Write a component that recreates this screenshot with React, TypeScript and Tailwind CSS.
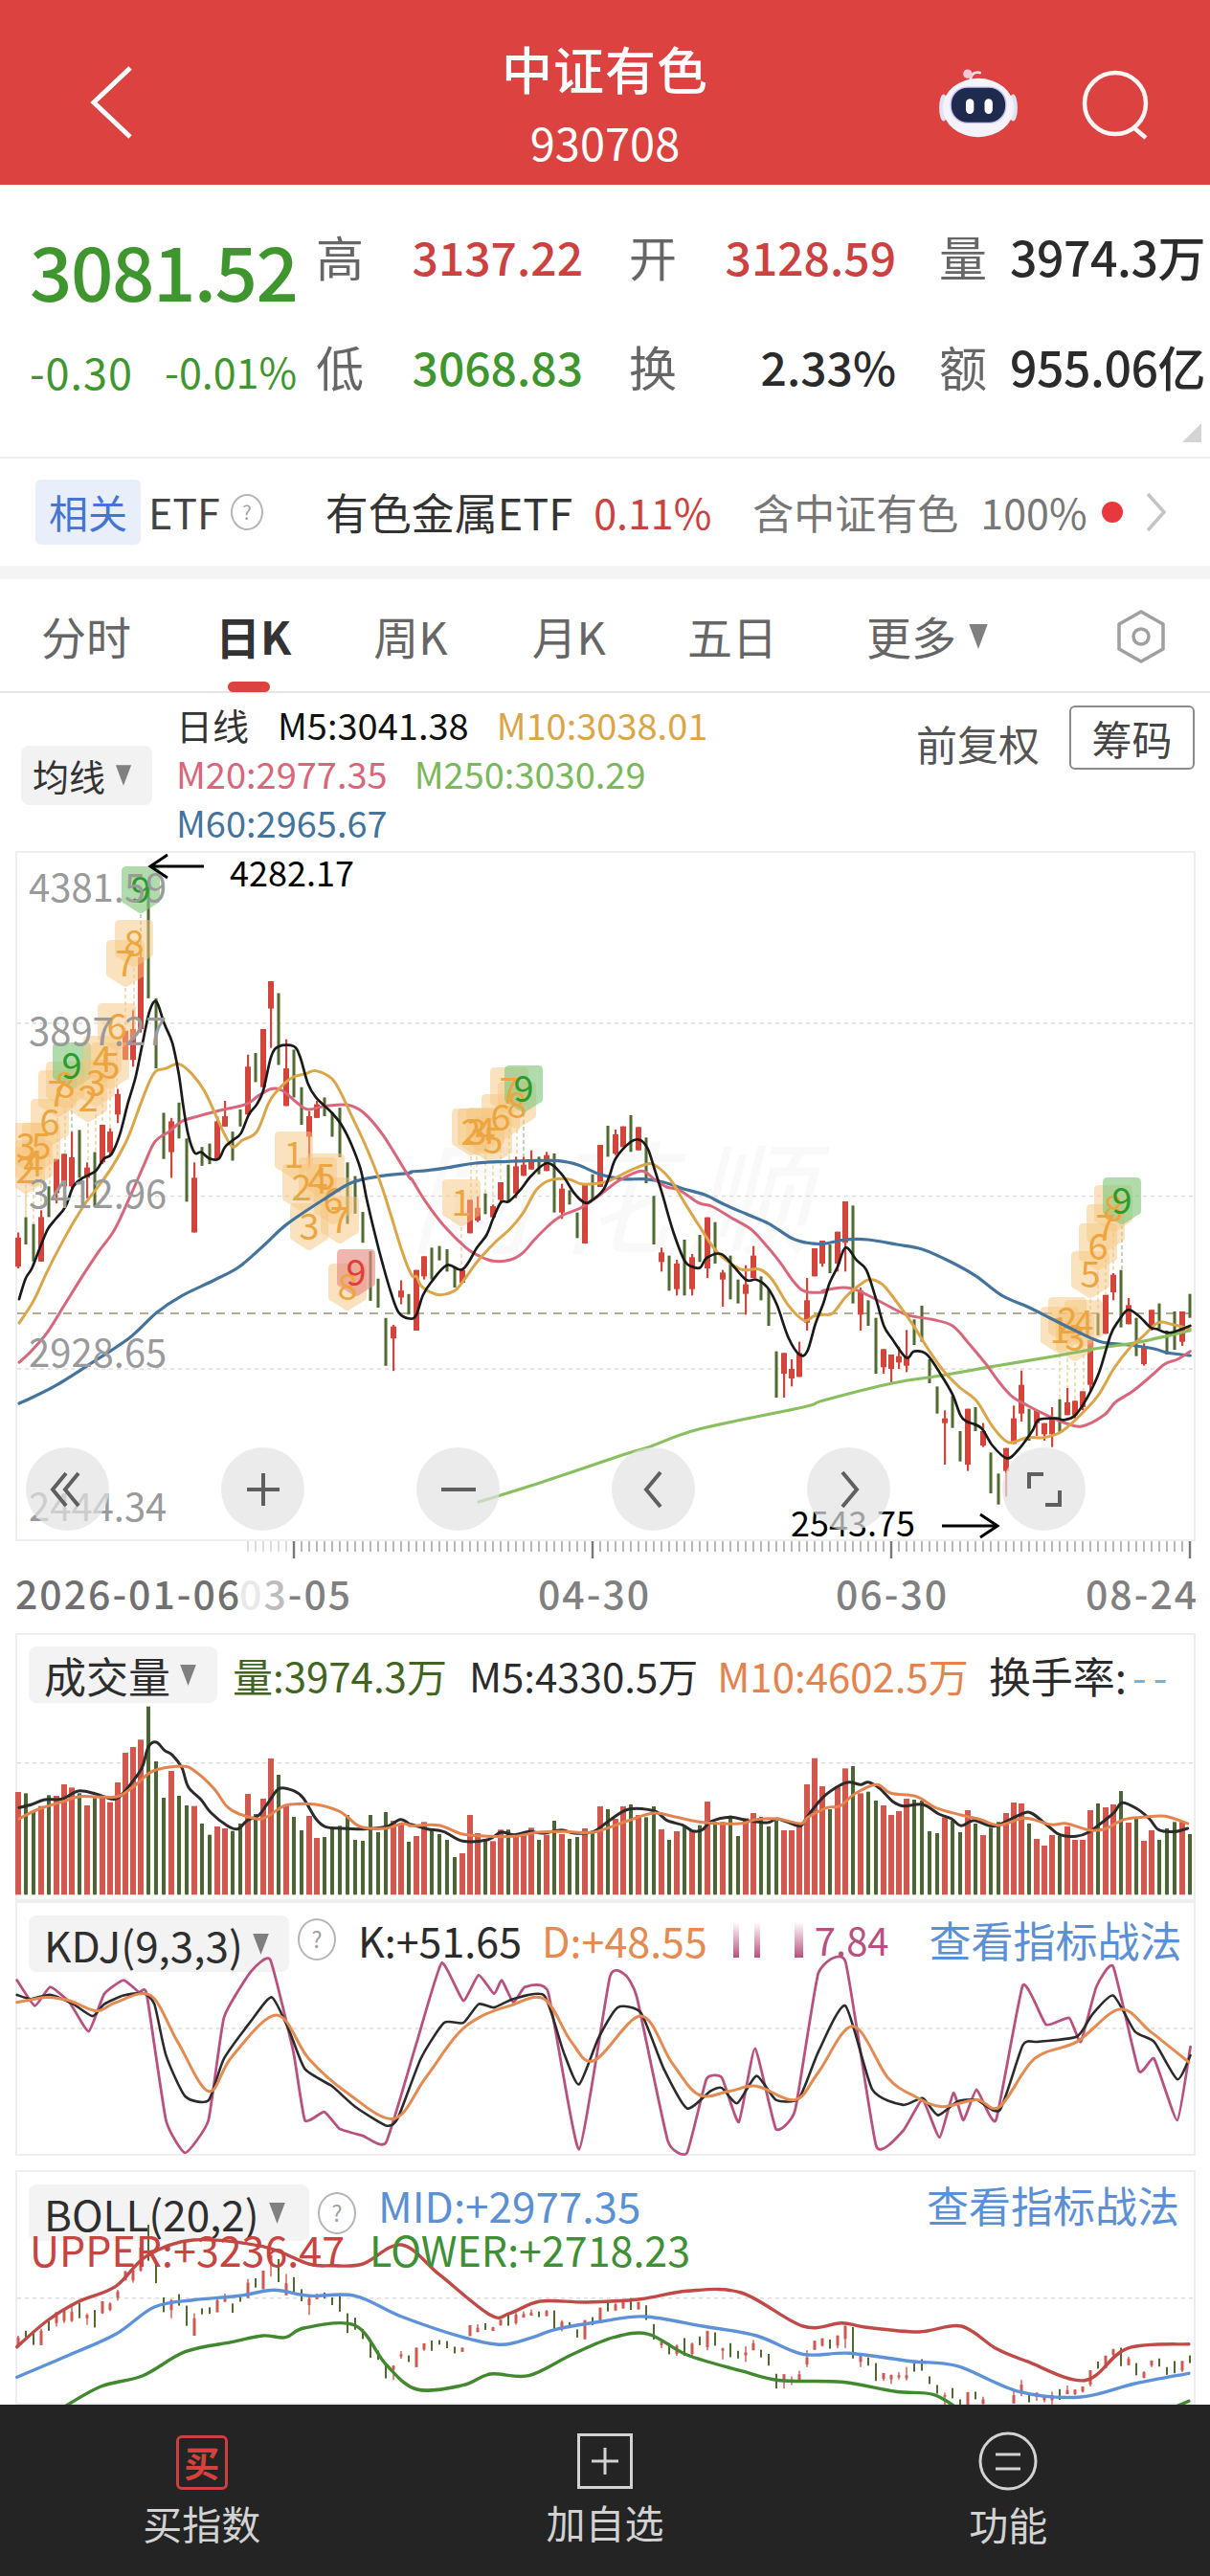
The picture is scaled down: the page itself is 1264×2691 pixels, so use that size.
import React from "react";

type P = [number, number];
type Candle = ["r" | "g", number, number, number, number];

const GREEN = "#4f6b2f";

// candles: colour, wick top, body top, body bottom, wick bottom
const candlesA: Candle[] = [
	["r",1085,1100,1185,1190],["g",1040,1040,1120,1120],["g",1060,1060,1170,1170],["r",1020,1040,1170,1170],["g",950,950,1040,1040],
	["r",870,870,970,1000],["r",855,855,950,970],["r",790,865,950,960],["g",785,785,925,925],["r",880,895,925,985],
	["g",850,850,1010,1010],["r",770,770,880,885],["r",780,790,850,860],["r",665,680,740,765],["r",495,495,580,580],
	["r",435,490,580,600],["r",265,280,490,500],["g",70,70,400,400],["g",400,400,605,605],["g",735,735,870,870],
	["r",750,760,850,925],["g",705,705,810,810],["g",810,810,995,995],["r",880,925,1085,1085],["g",835,835,890,890],
	["g",825,825,885,885],["r",745,760,870,870],["r",700,745,775,775],["g",790,790,875,875],["g",725,725,775,775],
	["r",565,600,740,740],["g",560,560,645,645],["r",490,490,660,660],["r",350,350,430,545],["g",385,385,595,595],
	["r",520,605,715,715],["g",550,550,690,690],["g",660,660,770,770],["r",730,745,805,895],["r",700,710,750,750],
	["g",690,690,745,745],["g",735,735,805,805],["g",720,720,865,865],["g",880,880,1060,1060],["g",920,920,1030,1030],
	["g",1025,1025,1115,1115],["g",1140,1140,1285,1285],["g",1220,1220,1305,1305],["g",1335,1335,1475,1475],["r",1355,1360,1395,1490],
	["r",1225,1255,1275,1295],["g",1265,1265,1325,1325],
];
const candlesB: Candle[] = [
	["r",620,620,810,810],["r",577,577,640,650],["g",550,550,650,650],["g",545,545,590,590],["g",555,555,625,625],
	["g",610,610,675,675],["r",620,620,660,660],["r",400,400,505,505],["r",390,425,465,470],["g",380,380,445,445],
	["r",415,420,455,455],["r",345,345,400,405],["g",290,290,405,405],["r",265,295,380,395],["r",265,290,325,325],
	["r",245,275,305,305],["g",265,265,320,320],["r",250,260,310,310],["g",255,255,440,440],["r",350,365,440,460],
	["g",370,370,415,415],["g",440,440,520,520],["r",350,350,537,537],["g",320,320,400,400],["r",228,228,360,360],
	["g",168,168,265,265],["r",180,195,255,260],["r",170,170,235,235],["g",135,135,250,250],["r",172,172,245,245],
	["g",205,205,348,348],["g",388,388,540,540],["r",550,565,595,625],["g",575,575,685,685],["r",588,600,680,700],
	["g",525,525,700,700],["r",570,580,680,700],["g",510,510,595,595],["r",455,455,615,645],["g",470,470,600,600],
	["r",620,628,650,735],["g",575,575,712,712],["g",650,650,725,725],["r",605,665,695,760],["r",545,575,645,645],
	["g",640,640,715,715],["g",680,680,795,795],["g",875,875,1020,1020],["r",880,880,945,1020],["r",900,930,960,985],
	["r",845,880,955,955],["r",645,715,785,810],["r",552,552,640,640],
];
const candlesC: Candle[] = [
	["r",228,228,300,310],["g",240,240,330,330],["r",200,200,300,325],["r",105,105,235,325],["g",118,118,425,425],
	["r",375,385,460,510],["g",415,415,495,495],["g",470,470,645,645],["r",568,568,625,645],["r",585,585,630,675],
	["r",560,590,610,630],["r",508,590,620,640],["g",475,475,555,555],["g",432,432,545,545],["g",600,600,675,675],
	["g",685,685,770,770],["r",760,785,800,930],["g",715,715,815,815],["g",825,825,920,920],["r",755,755,930,950],
	["g",750,750,825,825],["r",800,825,870,875],["g",892,892,1020,1020],["g",958,958,1055,1055],["r",878,878,950,1030],
	["r",745,785,865,865],["r",635,680,770,795],["g",755,755,855,855],["r",760,760,800,840],["r",800,800,835,855],
	["r",750,785,835,875],["g",725,725,830,830],["r",690,735,775,775],["r",730,730,775,785],["r",700,700,750,760],
	["r",540,540,680,700],["g",455,455,525,525],["r",398,398,520,520],["r",330,335,390,415],["g",320,320,500,500],
	["r",408,430,490,490],["g",470,470,590,590],["r",550,560,615,620],["r",445,445,495,510],["g",425,425,505,505],
	["g",510,510,585,585],["g",450,450,570,570],["r",450,450,545,558],["g",395,395,470,470],
];
const scaleCandle = (list: Candle[], y0: number, k: number): Candle[] =>
	list.map(([c, a, b, d, e]) => [c, y0 + a / k, y0 + b / k, y0 + d / k, y0 + e / k]);
const candles: Candle[] = [...scaleCandle(candlesA, 900, 2.8), ...scaleCandle(candlesB, 1120, 3), ...scaleCandle(candlesC, 1220, 3)];
const candleX = (i: number) => 19 + 8 * i;

const volumes: ["r" | "g", number][] = ([
	"r306","g310","g365","r350","g316","r318","r282","r292","g310","r348","g325","r318","r338","r276","r183","r165","r142","g38","g210","g324",
	"r240","g318","g348","r350","g405","g440","r414","r420","g428","g405","r312","g375","r327","r201","g252","r350","g384","g426","r381","r450",
	"g447","g415","g412","g378","g456","g459","g378","g432","g369","r396","r405","g462",
	"r444","r400","g425","g438","g456","g510","r498","r378","r435","g456","r460","r424","g424","r442","r440","r418","g456","r440","g396","r438",
	"g453","g447","r420","g432","r351","g360","r390","r351","g345","r378","g385","g351","r423","g456","r429","g415","r425","g410","r336","g400",
	"r400","g380","g444","r388","r372","g384","g414","g396","r426","r426","r415","r282","r200",
	"r288","g360","r288","r232","g225","r310","g305","g333","r348","r378","r366","r327","g330","g333","g429","g435","r385","g396","g432","r363",
	"g405","r441","g418","g400","r372","r339","r342","g405","r453","r474","r441","g444","r414","r456","r456","r363","g342","r354","r345","g303",
	"r402","g390","r459","r426","g456","g420","g400","r400","g438",
] as string[]).map((v) => [v[0] as "r" | "g", 1770 + Number(v.slice(1)) / 3]);

const tr = (a: P[], x0: number, sx: number, y0: number, sy: number): P[] =>
	a.map(([x, y]) => [x0 + x / sx, y0 + y / sy]);

// price lines, read off three crops of the chart
const m5: P[] = [
	...tr([[60,1280],[80,1220],[100,1190],[125,1130],[150,1075],[175,1045],[205,1010],[230,950],[260,925],[300,905],[325,870],[350,855],[375,800],[400,710],[425,630],[445,540],[468,440],[490,410],[515,475],[540,530],[560,620],[575,720],[590,800],[610,852],[630,850],[655,868],[685,870],[705,835],[730,815],[755,795],[780,740],[805,710],[825,670],[850,570],[875,540],[920,540],[940,570],[965,650],[990,690],[1040,735],[1070,770],[1100,825],[1130,900],[1150,990],[1175,1090],[1200,1180],[1225,1260],[1250,1320],[1285,1337]], 0, 3, 900, 2.8),
	...tr([[15,760],[35,700],[60,660],[110,605],[160,618],[205,550],[235,510],[255,460],[280,408],[305,405],[340,370],[375,325],[425,285],[470,320],[510,380],[540,408],[560,405],[600,370],[620,325],[640,270],[685,220],[715,212],[740,240],[760,300],[785,380],[820,500],[855,590],[880,610],[905,612],[925,582],[970,570],[1010,610],[1050,652],[1080,650],[1115,675],[1145,730],[1180,830],[1215,885],[1240,875],[1265,790],[1290,725]], 430, 3, 1120, 3),
	...tr([[80,360],[105,310],[130,250],[165,290],[195,320],[225,410],[250,495],[275,535],[320,595],[345,575],[385,585],[430,650],[465,710],[490,775],[510,795],[555,815],[590,870],[635,910],[670,885],[715,825],[735,790],[790,785],[815,790],[850,775],[890,715],[925,640],[960,525],[985,480],[1015,445],[1050,465],[1085,500],[1105,505],[1130,515],[1155,515],[1210,495]], 840, 3, 1220, 3),
];
const m10: P[] = [
	...tr([[60,1350],[105,1285],[150,1195],[200,1105],[260,1010],[300,960],[350,895],[400,810],[440,710],[470,640],[490,612],[520,605],[560,592],[600,620],[640,670],[680,750],[705,800],[730,835],[760,815],[805,790],[840,710],[860,680],[890,650],[920,630],[960,620],[990,612],[1040,635],[1070,680],[1100,740],[1150,840],[1200,960],[1260,1140],[1290,1210]], 0, 3, 900, 2.8),
	...tr([[15,640],[30,670],[60,690],[90,698],[135,685],[165,650],[205,595],[260,535],[310,490],[350,440],[390,370],[430,340],[490,335],[530,350],[570,350],[620,340],[680,310],[730,290],[760,290],[810,335],[850,400],[900,480],[950,555],[1000,600],[1040,620],[1090,618],[1130,650],[1180,730],[1230,778],[1260,765],[1290,760]], 430, 3, 1120, 3),
	...tr([[90,455],[130,405],[170,370],[205,350],[245,365],[290,420],[340,490],[390,570],[440,640],[490,690],[540,730],[590,810],[640,860],[700,845],[750,845],[800,830],[850,790],[920,715],[970,630],[1020,565],[1060,530],[1110,485],[1150,490],[1210,505]], 840, 3, 1220, 3),
];
const m20: P[] = [
	...tr([[60,1465],[100,1430],[150,1375],[200,1300],[260,1210],[310,1140],[360,1075],[410,975],[450,890],[485,820],[530,790],[570,760],[620,745],[680,730],[770,710],[810,685],[850,665],[885,670],[930,705],[965,725],[1020,715],[1090,712],[1140,735],[1200,800],[1280,920]], 0, 3, 900, 2.8),
	...tr([[0,335],[40,400],[100,480],[170,550],[210,575],[255,592],[310,588],[350,565],[385,525],[430,480],[470,450],[530,425],[590,385],[650,340],[720,310],[760,335],[800,360],[840,370],[900,410],[940,420],[1000,455],[1060,490],[1100,530],[1150,590],[1200,660],[1235,688],[1290,690]], 430, 3, 1120, 3),
	...tr([[60,385],[125,375],[170,385],[240,420],[320,460],[400,475],[465,495],[520,555],[570,615],[610,670],[650,715],[700,745],[760,775],[820,800],[870,810],[940,775],[975,735],[1030,700],[1090,650],[1130,615],[1170,600],[1210,575]], 840, 3, 1220, 3),
];
const m60: P[] = [
	[20,1466],
	...tr([[100,1568],[180,1530],[290,1465],[410,1390],[490,1320],[570,1270],[670,1225],[750,1185],[830,1120],[900,1060],[1020,985],[1100,940],[1180,922],[1280,911]], 0, 3, 900, 2.8),
	...tr([[0,312],[50,308],[120,298],[200,285],[300,280],[400,277],[460,278],[520,290],[590,320],[660,335],[730,335],[790,345],[850,365],[920,385],[980,415],[1050,445],[1120,475],[1190,520],[1240,535],[1290,538]], 430, 3, 1120, 3),
	...tr([[130,225],[200,225],[290,240],[370,255],[460,295],[540,340],[620,400],[700,435],[770,470],[850,510],[930,545],[1020,555],[1100,568],[1140,580],[1210,588]], 840, 3, 1220, 3),
];
const m250: P[] = [[500,1569],[564,1549],[650,1520],[677,1512],[730,1493],[839,1470],[860,1463],[932,1445],[983,1437],[1040,1427],[1100,1417],[1150,1408],[1190,1402],[1243,1390]];

const volM5: P[] = [
	...tr([[30,355],[70,345],[110,330],[165,328],[215,303],[270,312],[320,328],[345,320],[380,280],[415,230],[435,165],[460,150],[485,175],[510,190],[540,230],[560,290],[600,330],[630,370],[680,410],[715,422],[745,395],[780,380],[810,340],[845,295],[890,302],[920,325],[960,390],[990,415],[1040,420],[1110,422],[1180,415],[1225,392],[1255,408]], 10, 3, 1770, 3),
	...tr([[0,408],[50,422],[100,430],[160,460],[240,455],[280,432],[320,440],[370,430],[410,435],[470,425],[510,435],[570,430],[620,395],[680,360],[760,365],[800,395],[850,410],[880,428],[910,425],[940,398],[1000,385],[1050,395],[1115,402],[1145,390],[1190,405],[1220,412]], 430, 3, 1770, 3),
	...tr([[0,380],[50,320],[100,285],[130,275],[165,283],[190,275],[225,295],[265,335],[300,350],[360,345],[410,375],[450,390],[480,412],[520,395],[570,412],[600,408],[670,375],[700,372],[750,410],[790,440],[840,445],[880,432],[930,395],[960,370],[985,340],[1030,358],[1070,390],[1100,425],[1150,430],[1190,420]], 844, 3, 1770, 3),
];
const volM10: P[] = [
	...tr([[30,390],[90,360],[170,335],[220,320],[300,322],[345,318],[400,280],[450,240],[540,225],[580,240],[640,295],[680,350],[720,375],[790,390],[850,355],[880,345],[960,345],[1030,365],[1060,385],[1100,415],[1180,420],[1230,405],[1255,411]], 10, 3, 1770, 3),
	...tr([[0,412],[85,410],[160,438],[240,445],[320,445],[400,432],[480,430],[570,432],[680,395],[760,372],[830,385],[920,402],[1030,405],[1080,392],[1145,390],[1220,405]], 430, 3, 1770, 3),
	...tr([[0,385],[60,355],[100,350],[150,310],[215,283],[260,310],[340,320],[400,355],[480,378],[540,392],[600,410],[680,388],[760,408],[810,405],[880,425],[930,422],[990,392],[1050,385],[1120,382],[1190,405]], 844, 3, 1770, 3),
];

const kdjK: P[] = tr([[22,1103],[40,1115],[65,1103],[95,1130],[120,1165],[135,1130],[160,1105],[185,1098],[200,1130],[215,1280],[240,1400],[270,1412],[290,1290],[325,1180],[352,1110],[375,1210],[395,1320],[430,1370],[460,1430],[500,1485],[515,1465],[545,1290],[575,1185],[600,1185],[620,1130],[640,1140],[665,1115],[705,1105],[730,1270],[750,1365],[775,1230],[800,1140],[830,1155],[860,1320],[890,1435],[920,1385],[935,1375],[955,1420],[980,1340],[1005,1410],[1035,1405],[1060,1270],[1095,1135],[1130,1380],[1170,1425],[1195,1405],[1215,1455],[1240,1415],[1265,1410],[1295,1440],[1325,1250],[1345,1240],[1395,1225],[1415,1160],[1442,1105],[1470,1210],[1495,1240],[1525,1350],[1542,1280]], 0, 1.24, 1690, 2.8);
const kdjD: P[] = tr([[22,1125],[60,1110],[90,1120],[125,1150],[150,1125],[195,1105],[230,1240],[270,1385],[300,1285],[358,1162],[400,1290],[450,1390],[510,1465],[550,1350],[590,1225],[620,1170],[660,1135],[705,1115],[740,1240],[770,1295],[830,1165],[870,1300],[905,1395],[945,1385],[980,1370],[1030,1410],[1060,1330],[1105,1195],[1150,1345],[1185,1400],[1220,1430],[1265,1410],[1295,1430],[1340,1290],[1395,1240],[1450,1145],[1490,1210],[1540,1300]], 0, 1.24, 1690, 2.8);
const kdjJ: P[] = tr([[22,1060],[45,1135],[65,1080],[90,1125],[115,1210],[135,1100],[160,1060],[180,1095],[190,1100],[215,1470],[240,1565],[270,1470],[290,1170],[325,1035],[350,1000],[380,1270],[395,1470],[420,1445],[440,1495],[470,1515],[500,1535],[540,1240],[572,1010],[600,1120],[620,1045],[640,1100],[650,1060],[665,1125],[680,1080],[710,1095],[750,1555],[790,1050],[810,1045],[825,1110],[865,1530],[890,1565],[915,1350],[935,1345],[957,1475],[978,1260],[1005,1495],[1030,1440],[1060,1040],[1095,1005],[1135,1545],[1170,1500],[1195,1410],[1217,1520],[1235,1390],[1248,1470],[1265,1380],[1290,1470],[1325,1075],[1355,1190],[1385,1170],[1400,1240],[1420,1080],[1442,1020],[1475,1325],[1495,1290],[1525,1470],[1542,1255]], 0, 1.24, 1690, 2.8);

const bollU: P[] = tr([[22,605],[60,525],[100,465],[150,415],[190,320],[250,270],[340,290],[400,345],[430,350],[470,345],[520,285],[570,380],[635,505],[660,500],[700,462],[760,465],[830,455],[890,430],[960,435],[1040,540],[1090,530],[1120,543],[1190,558],[1245,540],[1290,610],[1330,650],[1405,710],[1460,610],[1540,596]], 0, 1.24, 2250, 3);
const bollM: P[] = tr([[22,700],[90,630],[150,565],[200,480],[250,458],[310,445],[355,427],[400,445],[460,445],[520,510],[600,575],[650,598],[690,575],[720,550],[780,525],[835,510],[910,540],[980,570],[1040,628],[1100,625],[1180,650],[1240,665],[1320,745],[1400,762],[1470,720],[1540,688]], 0, 1.24, 2250, 3);
const bollL: P[] = tr([[75,805],[130,730],[185,695],[240,620],[300,590],[340,570],[370,575],[395,545],[460,538],[500,660],[540,738],[600,725],[635,690],[685,695],[740,630],[795,575],[840,565],[890,630],[960,680],[1010,710],[1090,715],[1160,745],[1210,755],[1250,815]], 0, 1.24, 2250, 3);
const bollL2: P[] = tr([[1505,810],[1540,775]], 0, 1.24, 2250, 3);

// TD sequence bubbles sitting over the candles: digit, x, y, kind
const bubbles: [string, number, number, "o" | "g" | "p"][] = [
	["2",27,1223,"o"],["3",27,1198,"o"],["4",35,1216,"o"],["5",43,1198,"o"],["6",52,1173,"o"],["7",60,1143,"o"],["8",68,1134,"o"],["9",75,1114,"g"],
	["2",92,1148,"o"],["3",100,1132,"o"],["4",107,1107,"o"],["5",115,1114,"o"],["6",122,1073,"o"],["7",131,1007,"o"],["8",140,986,"o"],["9",147,930,"g"],
	["1",307,1207,"o"],["2",315,1241,"o"],["3",323,1282,"o"],["4",332,1234,"o"],["5",340,1230,"o"],["6",348,1255,"o"],["7",355,1275,"o"],["8",363,1345,"o"],["9",372,1330,"p"],
	["1",482,1257,"o"],["2",492,1183,"o"],["3",498,1183,"o"],["4",507,1182,"o"],["5",515,1192,"o"],["6",523,1168,"o"],["7",532,1140,"o"],["8",540,1155,"o"],["9",547,1138,"g"],
	["1",1107,1390,"o"],["2",1115,1380,"o"],["3",1123,1398,"o"],["4",1132,1383,"o"],["5",1139,1332,"o"],["6",1147,1303,"o"],["7",1155,1283,"o"],["8",1163,1263,"o"],["9",1172,1255,"g"],
];
const bubbleFill = { o: "#f6c67f", g: "#86c97f", p: "#e68f86" };
const bubbleText = { o: "#eda540", g: "#2c9a2c", p: "#e0403a" };

const smooth = (p: P[], k = 6) => {
	let d = `M${p[0][0].toFixed(1)} ${p[0][1].toFixed(1)}`;
	for (let i = 0; i < p.length - 1; i++) {
		const a = p[Math.max(i - 1, 0)];
		const b = p[i];
		const c = p[i + 1];
		const e = p[Math.min(i + 2, p.length - 1)];
		d += `C${(b[0] + (c[0] - a[0]) / k).toFixed(1)} ${(b[1] + (c[1] - a[1]) / k).toFixed(1)} ${(c[0] - (e[0] - b[0]) / k).toFixed(1)} ${(c[1] - (e[1] - b[1]) / k).toFixed(1)} ${c[0].toFixed(1)} ${c[1].toFixed(1)}`;
	}
	return d;
};

const Line = ({ points, color, width = 2.5, k = 6 }: { points: P[]; color: string; width?: number; k?: number }) => (
	<path d={smooth(points, k)} fill="none" stroke={color} strokeWidth={width} strokeLinejoin="round" strokeLinecap="round" />
);

const GridLine = ({ y, x2 = 1246 }: { y: number; x2?: number }) => (
	<line x1={18} x2={x2} y1={y} y2={y} stroke="#dddddd" strokeWidth={1.5} strokeDasharray="4 4" />
);

const Caret = ({ className = "" }: { className?: string }) => (
	<svg viewBox="0 0 20 26" className={`inline-block shrink-0 ${className}`}>
		<polygon points="1,1 19,1 10,25" fill="#808080" />
	</svg>
);

const Help = ({ size = 38, className = "" }: { size?: number; className?: string }) => (
	<span
		style={{ width: size, height: size + 4, fontSize: size * 0.58 }}
		className={`flex shrink-0 items-center justify-center rounded-[50%] border-[2.5px] border-[#b5b5b5] leading-none text-[#a0a0a0] ${className}`}
	>
		?
	</span>
);

const Pill = ({ label, w, text = "text-[42px]" }: { label: string; w: string; text?: string }) => (
	<div className={`flex h-[59px] items-center rounded-lg bg-[#f3f3f3] pl-[16px] ${w}`}>
		<span className={`${text} whitespace-nowrap leading-none text-[#2e2e2e]`}>{label}</span>
		<Caret className="ml-[9px] h-[24px] w-[19px]" />
	</div>
);

const StatRow = ({ children }: { children: React.ReactNode }) => (
	<div className="flex h-[60px] items-center whitespace-nowrap">{children}</div>
);

const Lab = ({ t }: { t: string }) => <span className="w-[97px] text-[50px] leading-none text-[#666666]">{t}</span>;

const Val = ({ t, c, mr = "mr-[48px]" }: { t: string; c: string; mr?: string }) => (
	<span className={`w-[182px] text-right text-[48px] font-medium leading-none ${mr} ${c}`}>{t}</span>
);

const Robot = () => (
	<svg viewBox="0 0 90 86" className="h-[80px] w-[84px]">
		<path d="M36 20q1-12 12-9" fill="none" stroke="#f3dfe6" strokeWidth="3" />
		<circle cx="33" cy="12" r="5" fill="#f6c9d4" />
		<ellipse cx="6" cy="50" rx="5" ry="15" fill="#dfe2f5" />
		<ellipse cx="84" cy="50" rx="5" ry="15" fill="#dfe2f5" />
		<ellipse cx="45" cy="50" rx="40" ry="33" fill="#f4f3fb" />
		<rect x="14" y="27" width="62" height="40" rx="19" fill="#1e2b4f" stroke="#c7bdf0" strokeWidth="1.5" />
		<rect x="31" y="40" width="9" height="17" rx="4.5" fill="#ffffff" />
		<rect x="52" y="40" width="9" height="17" rx="4.5" fill="#ffffff" />
	</svg>
);

const CircleBtn = ({ children }: { children: React.ReactNode }) => (
	<div className="flex h-[87px] w-[87px] items-center justify-center rounded-full bg-[#e2e2e2]/70">
		<svg viewBox="0 0 44 44" className="h-[44px] w-[44px]" fill="none" stroke="#5f5f5f" strokeWidth="4">
			{children}
		</svg>
	</div>
);

const MainChart = () => (
	<svg viewBox="16 889 1233 721" className="absolute inset-0 h-full w-full">
		<text x="427" y="1300" fontSize="128" fontStyle="italic" fill="#f9f9f9" letterSpacing="18">
			同花顺
		</text>
		<GridLine y={1069} />
		<GridLine y={1249.5} />
		<GridLine y={1430} />
		<line x1={18} x2={1246} y1={1372} y2={1372} stroke="#b8ab93" strokeWidth={2} strokeDasharray="9 7" />
		{candles.map(([c, a, b, d, e], i) =>
			c === "g" ? (
				<rect key={i} x={candleX(i) - 1.5} y={a} width={3} height={e - a} fill={GREEN} />
			) : (
				<g key={i} fill="#d2453c">
					<rect x={candleX(i) - 1} y={a} width={2.2} height={e - a} />
					<rect x={candleX(i) - 3} y={b} width={6} height={d - b} />
				</g>
			),
		)}
		{bubbles.map(([, x, y, k], i) => {
			const top = candles[Math.round((x - 19) / 8)]?.[1] ?? y;
			return top > y + 25 ? (
				<line key={i} x1={x} x2={x} y1={y + 25} y2={top} stroke={k === "g" ? "#a9c99c" : "#ead39f"} strokeWidth={1.5} strokeDasharray="4 3" />
			) : null;
		})}
		{bubbles.map(([, x, y, k], i) => (
			<path
				key={i}
				d={`M${x - 15} ${y - 25}h30q5 0 5 5v30q0 3-3 4l-14 9q-3 2-6 0l-14-9q-3-1-3-4v-30q0-5 5-5z`}
				fill={bubbleFill[k]}
				opacity={k === "o" ? 0.5 : 0.65}
			/>
		))}
		{bubbles.map(([t, x, y, k], i) => (
			<text key={i} x={x} y={y + 13} fontSize="38" textAnchor="middle" fill={bubbleText[k]}>
				{t}
			</text>
		))}
		<Line points={m60} color="#44749e" width={3.2} />
		<Line points={m250} color="#8abf5f" width={3.2} />
		<Line points={m20} color="#d9667a" width={3} />
		<Line points={m10} color="#dca548" width={3} />
		<Line points={m5} color="#1a1a1a" width={2.7} />
		<g fill="none" stroke="#000000" strokeWidth="3">
			<path d="M213 905H157M175 893l-18 12 18 12" />
			<path d="M984 1594h58M1024 1582l18 12-18 12" />
		</g>
	</svg>
);

const VolumeChart = () => (
	<svg viewBox="16 1706 1233 280" className="absolute inset-0 h-full w-full">
		<GridLine y={1841.7} />
		{volumes.map(([c, top], i) => (
			<rect
				key={i}
				x={candleX(i) - (c === "r" ? 3 : 2)}
				y={top}
				width={c === "r" ? 6 : 4}
				height={1979.3 - top}
				fill={c === "r" ? "#d2574f" : "#4a6632"}
			/>
		))}
		<Line points={volM5} color="#2b2b2b" width={3} />
		<Line points={volM10} color="#e5834f" width={3} />
	</svg>
);

const KdjChart = () => (
	<svg viewBox="16 1986 1233 266" className="absolute inset-0 h-full w-full">
		<GridLine y={2119} />
		<Line points={kdjJ} color="#b9507f" width={2.8} k={14} />
		<Line points={kdjK} color="#2b2b2b" width={2.6} k={10} />
		<Line points={kdjD} color="#e58a50" width={3} />
	</svg>
);

const BollChart = () => (
	<svg viewBox="16 2267 1233 245" className="absolute inset-0 h-full w-full">
		<GridLine y={2400.7} />
		{candles.map(([c, a, b, d, e], i) => {
			const f = (y: number) => 2392 + (y - 1137.5) * 0.32;
			return c === "g" ? (
				<rect key={i} x={candleX(i) - 1} y={f(a)} width={2} height={f(e) - f(a)} fill={GREEN} />
			) : (
				<g key={i} fill="#d2574f">
					<rect x={candleX(i) - 0.7} y={f(a)} width={1.4} height={f(e) - f(a)} />
					<rect x={candleX(i) - 1.5} y={f(b)} width={3} height={f(d) - f(b)} />
				</g>
			);
		})}
		<Line points={bollU} color="#bf4a47" width={3.4} />
		<Line points={bollM} color="#5e92d8" width={3.4} />
		<Line points={bollL} color="#41882f" width={3.4} />
		<Line points={bollL2} color="#41882f" width={3.4} />
	</svg>
);

const Ruler = () => (
	<svg viewBox="0 0 1264 19" className="h-[19px] w-[1264px] shrink-0">
		{Array.from({ length: 124 }).map((_, i) => {
			const x = 259 + 8 * i;
			const major = (x - 307) % 312 === 0;
			return (
				<line
					key={i}
					x1={x}
					x2={x}
					y1={0}
					y2={major ? 18 : 11}
					stroke={major ? "#777777" : "#9a9a9a"}
					strokeWidth={major ? 2.4 : 1.4}
					opacity={x < 305 ? 0.45 : 1}
				/>
			);
		})}
	</svg>
);

const App = () => {
	return (
		<div className="flex h-[2691px] w-[1264px] flex-col overflow-hidden bg-white font-['Noto_Sans_CJK_SC','Noto_Sans',sans-serif]">
			{/* Header */}
			<header className="grid h-[193px] shrink-0 grid-cols-[320px_1fr_320px] items-start bg-[#dc4240]">
				<div className="pl-[92px] pt-[67px]">
					<svg viewBox="0 0 50 80" className="h-[80px] w-[50px]" fill="none" stroke="#ffffff" strokeWidth="5">
						<path d="M44 4 6 40l38 36" />
					</svg>
				</div>
				<div className="flex flex-col items-center pt-[36px] text-white">
					<span className="text-[53px] font-medium leading-[70px] tracking-[1px]">中证有色</span>
					<span className="mt-[12px] text-[47px] leading-[60px]">930708</span>
				</div>
				<div className="flex items-start justify-end pr-[56px] pt-[66px]">
					<Robot />
					<svg viewBox="0 0 80 80" className="ml-[64px] mt-[6px] h-[80px] w-[80px]" fill="none" stroke="#fff6f5" strokeWidth="4.5">
						<circle cx="37" cy="36" r="32" />
						<path d="M56 61l13 11" />
					</svg>
				</div>
			</header>

			{/* Quote */}
			<section className="relative flex h-[286px] shrink-0 border-b-2 border-[#eeeeee]">
				<div className="w-[330px] shrink-0 pl-[31px] pt-[48px]">
					<div className="text-[78px] font-medium leading-[80px] tracking-[-1.5px] text-[#3f962f]">3081.52</div>
					<div className="mt-[42px] flex h-[48px] items-center text-[45px] leading-none text-[#3f962f]">
						<span className="w-[141px] tracking-[1px]">-0.30</span>
						<span className="text-[43px]">-0.01%</span>
					</div>
				</div>
				<div className="flex flex-col gap-[55px] pt-[44px]">
					<StatRow>
						<Lab t="高" />
						<Val t="3137.22" c="text-[#cb4240]" />
						<Lab t="开" />
						<Val t="3128.59" c="text-[#cb4240]" mr="mr-[45px]" />
						<span className="w-[74px] text-[50px] leading-none text-[#666666]">量</span>
						<span className="text-[50px] font-medium leading-none tracking-[-0.5px] text-[#2b2b2b]">3974.3万</span>
					</StatRow>
					<StatRow>
						<Lab t="低" />
						<Val t="3068.83" c="text-[#3f962f]" />
						<Lab t="换" />
						<Val t="2.33%" c="text-[#2b2b2b]" mr="mr-[45px]" />
						<span className="w-[74px] text-[50px] leading-none text-[#666666]">额</span>
						<span className="text-[50px] font-medium leading-none tracking-[-0.5px] text-[#2b2b2b]">955.06亿</span>
					</StatRow>
				</div>
				<svg viewBox="0 0 20 20" className="absolute bottom-[15px] right-[9px] h-[20px] w-[20px]">
					<polygon points="20,0 20,20 0,20" fill="#d4d4d4" />
				</svg>
			</section>

			{/* Related ETF */}
			<section className="flex h-[112px] shrink-0 items-center whitespace-nowrap pb-[1px] pl-[37px] text-[43px] leading-none">
				<span className="flex h-[68px] w-[110px] items-center justify-center rounded-md bg-[#e8eefa] text-[41px] text-[#4474d4]">相关</span>
				<span className="ml-[8px] text-[43px] text-[#444444]">ETF</span>
				<Help size={34} className="ml-[11px]" />
				<span className="ml-[65px] text-[45px] text-[#333333]">有色金属ETF</span>
				<span className="ml-[22px] text-[#cb4240]">0.11%</span>
				<span className="ml-[43px] text-[#777777]">含中证有色</span>
				<span className="ml-[23px] text-[#777777]">100%</span>
				<span className="ml-[15px] h-[22px] w-[22px] rounded-full bg-[#e8383d]" />
				<svg viewBox="0 0 24 44" className="ml-[23px] h-[44px] w-[24px]" fill="none" stroke="#c4c4c4" strokeWidth="3.5">
					<path d="M3 3l17 19L3 41" />
				</svg>
			</section>
			<div className="h-[14px] shrink-0 bg-[#f4f4f4]" />

			{/* Period tabs */}
			<nav className="flex h-[119px] shrink-0 items-start whitespace-nowrap border-b-2 border-[#e6e6e6] pl-[43px] pt-[32px] text-[47px] leading-[54px] text-[#666666]">
				<span>分时</span>
				<span className="relative ml-[88px] font-bold text-[#333333]">
					日K
					<span className="absolute left-[13px] top-[75px] h-[11px] w-[44px] rounded-full bg-[#dc4240]" />
				</span>
				<span className="ml-[86px]">周K</span>
				<span className="ml-[88px]">月K</span>
				<span className="ml-[85px]">五日</span>
				<span className="ml-[93px]">更多</span>
				<Caret className="ml-[11px] mt-[14px] h-[28px] w-[24px]" />
				<svg viewBox="0 0 56 56" className="ml-[130px] h-[56px] w-[56px]" fill="none" stroke="#a0a0a0" strokeWidth="3.5" strokeLinejoin="round">
					<polygon points="28,2 51,15 51,41 28,54 5,41 5,15" />
					<circle cx="28" cy="28" r="8" />
				</svg>
			</nav>

			{/* Moving average legend */}
			<section className="flex h-[165px] shrink-0 items-start whitespace-nowrap text-[38px] leading-[51px]">
				<div className="ml-[22px] mt-[55px] flex h-[62px] w-[137px] items-center rounded-lg bg-[#f2f2f2] pl-[12px]">
					<span className="text-[38px] leading-none text-[#333333]">均线</span>
					<Caret className="ml-[10px] h-[24px] w-[18px]" />
				</div>
				<div className="ml-[25px] mt-[7px] w-[773px]">
					<div className="flex h-[51px] items-center">
						<span className="text-[#333333]">日线</span>
						<span className="ml-[30px] text-[#111111]">M5:3041.38</span>
						<span className="ml-[29px] text-[#dca548]">M10:3038.01</span>
					</div>
					<div className="flex h-[51px] items-center">
						<span className="text-[#d9667a]">M20:2977.35</span>
						<span className="ml-[28px] text-[#79b85c]">M250:3030.29</span>
					</div>
					<div className="flex h-[51px] items-center text-[#44749e]">M60:2965.67</div>
				</div>
				<span className="mt-[27px] text-[43px] leading-[50px] text-[#555555]">前复权</span>
				<span className="ml-[31px] mt-[13px] flex h-[67px] w-[131px] items-center justify-center rounded-md border-2 border-[#8a8a8a] text-[42px] leading-none text-[#444444]">
					筹码
				</span>
			</section>

			{/* Candlestick chart */}
			<div className="relative ml-[16px] h-[721px] w-[1233px] shrink-0 ring-2 ring-inset ring-[#eeeeee]">
				<MainChart />
				<div className="absolute left-[14px] top-0 text-[40px] leading-none text-[#9a9a9a]">
					<span className="absolute top-[16px]">4381.59</span>
					<span className="absolute top-[166px]">3897.27</span>
					<span className="absolute top-[336px]">3412.96</span>
					<span className="absolute top-[502px]">2928.65</span>
					<span className="absolute top-[663px]">2444.34</span>
				</div>
				<span className="absolute left-[224px] top-[4px] text-[36px] leading-[34px] text-black">4282.17</span>
				<span className="absolute left-[810px] top-[683px] text-[36px] leading-[34px] text-black">2543.75</span>
				<div className="absolute left-[11px] top-[623px] flex gap-[117px]">
					<CircleBtn>
						<path d="M20 5 6 22l14 17M33 5 19 22l14 17" />
					</CircleBtn>
					<CircleBtn>
						<path d="M22 5v34M5 22h34" />
					</CircleBtn>
					<CircleBtn>
						<path d="M4 22h36" />
					</CircleBtn>
					<CircleBtn>
						<path d="M29 4 14 22l15 18" />
					</CircleBtn>
					<CircleBtn>
						<path d="M15 4l15 18-15 18" />
					</CircleBtn>
					<CircleBtn>
						<path d="M21 6H6v15M23 38h15V23" />
					</CircleBtn>
				</div>
			</div>

			{/* Time axis */}
			<Ruler />
			<div className="flex h-[77px] shrink-0 items-start whitespace-nowrap pl-[16px] pt-[12px] text-[41px] font-medium leading-[44px] tracking-[2px] text-[#808080]">
				<span className="w-[234px] text-[#707070]">2026-01-06</span>
				<span className="w-[312px]">
					<span className="text-[#e9e9e9]">0</span>
					<span className="text-[#bdbdbd]">3</span>-05
				</span>
				<span className="w-[311px]">04-30</span>
				<span className="w-[261px]">06-30</span>
				<span>08-24</span>
			</div>

			{/* Volume */}
			<div className="relative ml-[16px] h-[280px] w-[1233px] shrink-0 ring-2 ring-inset ring-[#eeeeee]">
				<VolumeChart />
				<div className="absolute left-[14px] top-[14px] flex items-center whitespace-nowrap text-[42px] leading-none">
					<Pill label="成交量" w="w-[197px]" text="text-[44px]" />
					<span className="ml-[16px] text-[#41641f]">量:3974.3万</span>
					<span className="ml-[23px] text-[#2b2b2b]">M5:4330.5万</span>
					<span className="ml-[20px] text-[#e5834f]">M10:4602.5万</span>
					<span className="ml-[21px] text-[44px] text-[#2b2b2b]">换手率:</span>
					<span className="ml-[6px] tracking-[7px] text-[#6cb3e0]">--</span>
				</div>
			</div>

			{/* KDJ */}
			<div className="relative ml-[16px] h-[266px] w-[1233px] shrink-0 ring-2 ring-inset ring-[#eeeeee]">
				<div className="absolute left-[14px] top-[15px]">
					<Pill label="KDJ(9,3,3)" w="w-[272px]" text="text-[44px]" />
				</div>
				<KdjChart />
				<div className="absolute left-[295px] top-[15px] flex h-[50px] items-center whitespace-nowrap text-[43px] leading-none">
					<Help size={40} />
					<span className="ml-[23px] text-[#2b2b2b]">K:+51.65</span>
					<span className="ml-[21px] text-[#e58a50]">D:+48.55</span>
					<span className="ml-[27px] flex h-[37px] w-[85px] items-stretch">
						<span className="w-[6px] bg-gradient-to-t from-[#b9507f] to-transparent" />
						<span className="ml-[16px] w-[6px] bg-gradient-to-t from-[#b9507f] to-transparent" />
						<span className="ml-[36px] w-[9px] bg-gradient-to-t from-[#b9507f] to-transparent" />
					</span>
					<span className="text-[40px] text-[#b9507f]">7.84</span>
					<span className="ml-[42px] text-[44px] text-[#5b8fd6]">查看指标战法</span>
				</div>
			</div>

			<div className="h-[15px] shrink-0" />

			{/* BOLL */}
			<div className="relative ml-[16px] h-[245px] w-[1233px] shrink-0 overflow-hidden ring-2 ring-inset ring-[#eeeeee]">
				<div className="absolute left-[14px] top-[15px]">
					<Pill label="BOLL(20,2)" w="w-[293px]" text="text-[44px]" />
				</div>
				<BollChart />
				<div className="absolute left-[316px] top-[15px] flex h-[58px] w-[900px] items-start whitespace-nowrap text-[44px] leading-[42px]">
					<Help size={40} className="mt-[8px]" />
					<span className="ml-[23px] text-[#5b8fd6]">MID:+2977.35</span>
					<span className="ml-auto text-[#5b8fd6]">查看指标战法</span>
				</div>
				<div className="absolute left-[15px] top-[61px] flex whitespace-nowrap text-[43px] leading-[42px]">
					<span className="text-[#c8443f]">UPPER:+3236.47</span>
					<span className="ml-[26px] text-[#3f8f35]">LOWER:+2718.23</span>
				</div>
			</div>

			{/* Bottom toolbar */}
			<footer className="grid h-[179px] shrink-0 grid-cols-3 bg-[#242424] text-[41px] leading-none text-[#d2d2d2]">
				<div className="flex flex-col items-center pt-[32px]">
					<span className="flex h-[57px] w-[54px] items-center justify-center rounded-md border-[3px] border-[#c8423f] text-[37px] font-bold leading-none text-[#d8403d]">买</span>
					<span className="mt-[14px]">买指数</span>
				</div>
				<div className="flex flex-col items-center pt-[30px]">
					<svg viewBox="0 0 58 58" className="h-[58px] w-[58px]" fill="none" stroke="#d2d2d2" strokeWidth="3">
						<rect x="1.5" y="1.5" width="55" height="55" />
						<path d="M29 15v28M15 29h28" />
					</svg>
					<span className="mt-[14px]">加自选</span>
				</div>
				<div className="flex flex-col items-center pt-[28px]">
					<svg viewBox="0 0 62 62" className="h-[62px] w-[62px]" fill="none" stroke="#d2d2d2" strokeWidth="3">
						<circle cx="31" cy="31" r="29" />
						<path d="M18 24h26M18 39h26" />
					</svg>
					<span className="mt-[14px]">功能</span>
				</div>
			</footer>
		</div>
	);
};

export default App;
